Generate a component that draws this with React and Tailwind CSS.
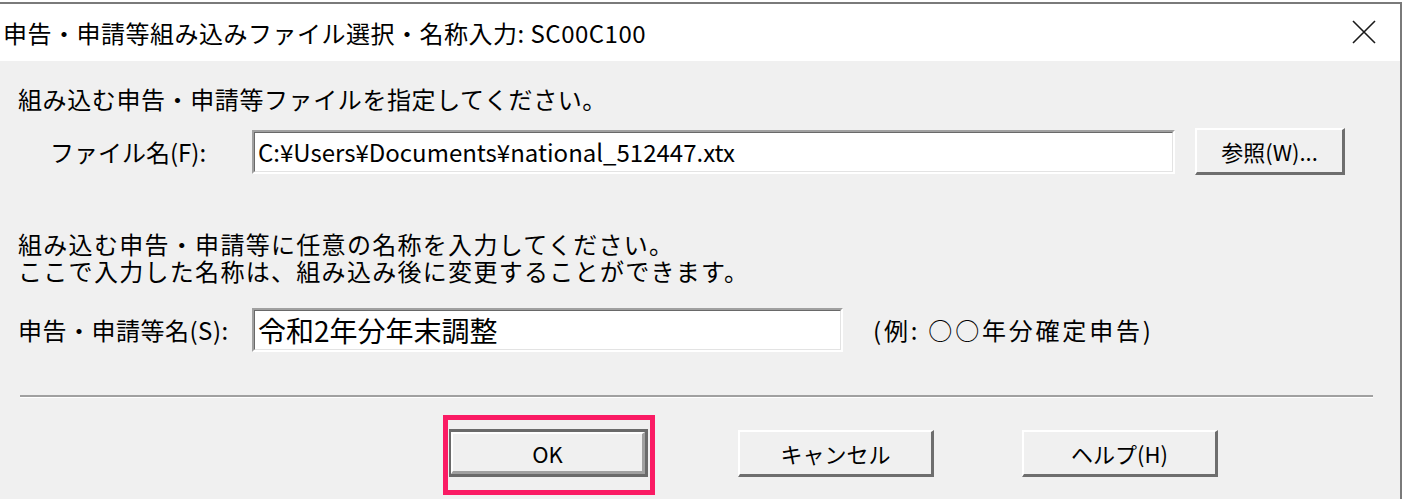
import React from 'react';

const font = "font-['Noto_Sans_CJK_JP','Noto_Sans',sans-serif]";

const Button = ({ children, className = '' }) => (
  <div className={`flex items-center justify-center bg-[#f0f0f0] border-t-2 border-l-2 border-t-white border-l-white border-r-[3px] border-b-[3px] border-r-[#6e6e6e] border-b-[#6e6e6e] text-[22px] leading-none text-black ${className}`}>
    {children}
  </div>
);

const DefaultButton = ({ children }) => (
  <div className="w-[199px] h-[48px] border-t-[3px] border-l-2 border-r-[3px] border-b-[3px] border-[#6a6a6a]">
    <div className="w-full h-full flex items-center justify-center bg-[#f0f0f0] border-t-2 border-l-2 border-t-white border-l-white border-r-[3px] border-b-[3px] border-r-[#a0a0a0] border-b-[#a0a0a0] text-[22px] leading-none text-black">
      {children}
    </div>
  </div>
);

const Field = ({ value, className = '', textClass = 'text-[24px]' }) => (
  <div className={`h-[44px] border-t-2 border-l-2 border-t-[#a0a0a0] border-l-[#a0a0a0] border-b-2 border-r-2 border-b-white border-r-white ${className}`}>
    <div className={`w-full h-full bg-white border-t border-l border-t-[#696969] border-l-[#696969] border-b border-r border-b-[#e3e3e3] border-r-[#e3e3e3] flex items-center pl-[3px] leading-none text-black whitespace-nowrap overflow-hidden ${textClass}`}>
      {value}
    </div>
  </div>
);

const App = () => {
  return (
    <div className={`w-[1403px] h-[502px] bg-white overflow-hidden ${font}`}>
      <div className="mt-[2px] w-[1402px] border-t-2 border-r-2 border-[#7a7a7a]">
        {/* title bar */}
        <div className="h-[57px] flex items-center justify-between pl-[3px] pr-[24px] bg-white">
          <span className="text-[24px] leading-none text-black pt-[1px] tracking-[0.5px]">申告・申請等組み込みファイル選択・名称入力: SC00C100</span>
          <svg width="24" height="24" viewBox="0 0 24 24" className="mt-[-2px]">
            <path d="M1 1 L23 23 M23 1 L1 23" stroke="#1a1a1a" strokeWidth="1.6" fill="none" />
          </svg>
        </div>

        {/* body */}
        <div className="h-[438px] bg-[#f0f0f0] pt-[25px] text-black">
          <p className="pl-[18px] text-[24px] leading-[26px] h-[26px] tracking-[0.6px]">組み込む申告・申請等ファイルを指定してください。</p>

          <div className="mt-[16px] h-[47px] flex items-center">
            <span className="pl-[50px] w-[252px] text-[24px] leading-none">ファイル名(F):</span>
            <Field className="w-[923px]" textClass="text-[24px]" value="C:¥Users¥Documents¥national_512447.xtx" />
            <Button className="ml-[20px] w-[150px] h-[47px]">参照(W)...</Button>
          </div>

          <div className="mt-[55px] pl-[18px] text-[24px] leading-[27px] tracking-[1.3px]">
            <p className="h-[27px]">組み込む申告・申請等に任意の名称を入力してください。</p>
            <p className="h-[27px]">ここで入力した名称は、組み込み後に変更することができます。</p>
          </div>

          <div className="mt-[24px] h-[44px] flex items-center">
            <span className="pl-[18px] w-[252px] text-[24px] leading-none tracking-[0.5px]">申告・申請等名(S):</span>
            <Field className="w-[591px]" textClass="text-[28px]" value="令和2年分年末調整" />
            <span className="ml-[30px] text-[24px] leading-none tracking-[2.8px]">(例: ○○年分確定申告)</span>
          </div>

          <div className="mt-[43px] ml-[20px] w-[1353px] h-[3px] border-t-2 border-[#a0a0a0] border-b border-b-white" />

          <div className="mt-[17px] flex items-start">
            <div className="ml-[443px] w-[212px] h-[80px] border-[5px] border-[#fa1b64] pl-[1px] pt-[9px]">
              <DefaultButton>OK</DefaultButton>
            </div>
            <Button className="mt-[15px] ml-[83px] w-[196px] h-[47px]">キャンセル</Button>
            <Button className="mt-[15px] ml-[88px] w-[196px] h-[47px]">ヘルプ(H)</Button>
          </div>
        </div>
      </div>
    </div>
  );
};

export default App;
